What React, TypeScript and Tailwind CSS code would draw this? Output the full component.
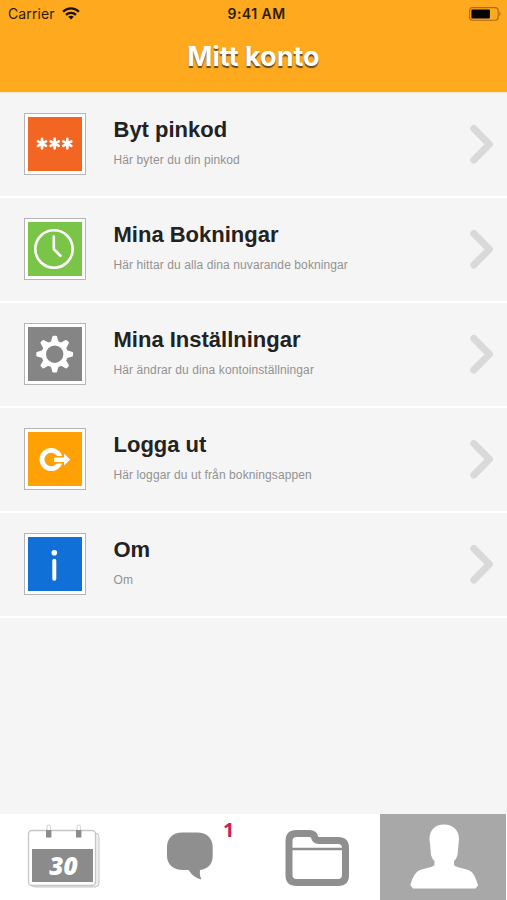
import React from 'react'

interface MenuItem {
  title: string
  subtitle: string
  color: string
  icon: React.ReactNode
}

const PinIcon = () => (
  <svg viewBox="0 0 54 54" className="w-full h-full" stroke="#fff" strokeWidth="2.7" strokeLinecap="round">
    {[14, 26.7, 39.3].map((x) => (
      <path key={x} transform={`translate(${x} 26.6)`} d="M0-4.7V4.7M-4-2.3L4 2.3M-4 2.3L4-2.3" />
    ))}
  </svg>
)

const ClockIcon = () => (
  <svg viewBox="0 0 54 54" className="w-full h-full" fill="none" stroke="#fff" strokeWidth="2.6" strokeLinecap="round">
    <circle cx="26" cy="27" r="18.7" />
    <path d="M25.8 14.5V27.3L32.4 33.8" />
  </svg>
)

const GearIcon = () => (
  <svg viewBox="0 0 54 54" className="w-full h-full">
    <circle cx="26.7" cy="27.2" r="10.9" fill="none" stroke="#fff" strokeWidth="4.4" />
    {[0, 45, 90, 135, 180, 225, 270, 315].map((angle) => (
      <path
        key={angle}
        transform={`translate(26.7 27.2) rotate(${angle})`}
        d="M-2.9-12L-1.3-17.4H1.3L2.9-12Z"
        fill="#fff"
        stroke="#fff"
        strokeWidth="2"
        strokeLinejoin="round"
      />
    ))}
  </svg>
)

const LogoutIcon = () => (
  <svg viewBox="0 0 54 54" className="w-full h-full">
    <circle cx="23.2" cy="27.5" r="9.2" fill="none" stroke="#fff" strokeWidth="4.8" />
    {/* the tile colour around the arrow cuts the ring open */}
    <path d="M26.2 25.4H36V21.6L42.2 27.6L36 33.7V29.9H26.2Z" fill="#fff" stroke="#ffa005" strokeWidth="3" />
    <path d="M26.2 25.4H36V21.6L42.2 27.6L36 33.7V29.9H26.2Z" fill="#fff" />
  </svg>
)

const InfoIcon = () => (
  <svg viewBox="0 0 54 54" className="w-full h-full" fill="#fff">
    <circle cx="26.3" cy="15.7" r="2.8" />
    <rect x="24.3" y="21.8" width="4" height="22" rx="2" />
  </svg>
)

const items: MenuItem[] = [
  { title: 'Byt pinkod', subtitle: 'Här byter du din pinkod', color: 'bg-[#f26522]', icon: <PinIcon /> },
  { title: 'Mina Bokningar', subtitle: 'Här hittar du alla dina nuvarande bokningar', color: 'bg-[#7ac547]', icon: <ClockIcon /> },
  { title: 'Mina Inställningar', subtitle: 'Här ändrar du dina kontoinställningar', color: 'bg-[#858585]', icon: <GearIcon /> },
  { title: 'Logga ut', subtitle: 'Här loggar du ut från bokningsappen', color: 'bg-[#ffa005]', icon: <LogoutIcon /> },
  { title: 'Om', subtitle: 'Om', color: 'bg-[#116fd8]', icon: <InfoIcon /> }
]

function StatusBar() {
  return (
    <div className="grid grid-cols-[1fr_auto_1fr] items-center h-[27px] pl-2 pr-[6px] text-[14px] text-[#2b1c05]">
      <div className="flex items-center gap-[7px]">
        <span className="tracking-[0.1px]">Carrier</span>
        <svg viewBox="0 0 18 13" className="w-[18px] h-[13px]" fill="none" stroke="#1a1203" strokeWidth="2.3">
          <path d="M1.1 4.7C5.6.3 12.4.3 16.9 4.7" />
          <path d="M4 7.8C6.8 5.1 11.2 5.1 14 7.8" />
          <path d="M9 12.6L6.2 9.8C7.8 8.4 10.2 8.4 11.8 9.8Z" fill="#1a1203" stroke="none" />
        </svg>
      </div>
      <div className="pl-1 text-center font-semibold whitespace-nowrap tracking-[0.45px]">9:41 AM</div>
      <svg viewBox="0 0 32 14" className="w-8 h-[14px] justify-self-end">
        <rect x=".6" y=".6" width="28.6" height="12.6" rx="3" fill="none" stroke="#a66d12" strokeWidth="1.1" />
        <rect x="2.4" y="2.4" width="18.5" height="9" rx="1" fill="#080500" />
        <path d="M30.4 4.6C31.9 5.3 31.9 8.5 30.4 9.2Z" fill="#a66d12" />
      </svg>
    </div>
  )
}

function MenuRow({ item }: { item: MenuItem }) {
  return (
    <li className="flex items-start h-[105px] pt-5 pl-6 pr-3 border-b-2 border-white">
      <div className="shrink-0 size-[62px] p-[3px] bg-white border border-[#b5b5b8]">
        <div className={`size-[54px] ${item.color}`}>{item.icon}</div>
      </div>
      <div className="flex-1 min-w-0 pl-[27.5px]">
        <div className="mt-[3px] text-[22px] leading-[28px] font-bold text-[#222] whitespace-nowrap">{item.title}</div>
        <div className="mt-[8px] text-[12px] leading-[16px] tracking-[0.1px] text-[#929292] whitespace-nowrap">{item.subtitle}</div>
      </div>
      <svg viewBox="0 0 26 40" className="shrink-0 w-[26px] h-10 mt-[11px]" fill="none" stroke="#d9d9d9" strokeWidth="7" strokeLinecap="round" strokeLinejoin="round">
        <path d="M4.8 4.5L20.4 20.3L4.8 36" />
      </svg>
    </li>
  )
}

function TabBar() {
  return (
    <nav className="grid grid-cols-[127px_127px_126px_126px] h-[86px] bg-white">
      <div>
        <svg viewBox="0 0 127 86" className="w-full h-full">
          <rect x="31" y="19" width="68" height="54" rx="4" fill="#eee" stroke="#c6c6c6" />
          <rect x="28.5" y="16.5" width="67" height="55" rx="3.5" fill="#fff" stroke="#c6c6c6" strokeWidth="1.3" />
          <rect x="32" y="35" width="61" height="33" fill="#8b8b8b" />
          <rect x="47" y="11" width="3.4" height="12" rx="1.7" fill="#fff" stroke="#d0d0d0" />
          <rect x="77" y="11" width="3.4" height="12" rx="1.7" fill="#fff" stroke="#d0d0d0" />
          <rect x="46" y="16" width="5.4" height="7.5" fill="#8b8b8b" />
          <rect x="76" y="16" width="5.4" height="7.5" fill="#8b8b8b" />
          <text x="63.5" y="60.5" textAnchor="middle" fill="#fff" className="font-['Open_Sans',sans-serif] text-[24.5px] font-extrabold italic">30</text>
        </svg>
      </div>
      <div className="relative">
        <svg viewBox="0 0 127 86" className="w-full h-full" fill="#8f8f8f">
          <path d="M55 18.5H70C80 18.5 85.7 24.5 85.7 33V42C85.7 50 81 55 73 56C72.5 59.5 73 62.5 74.5 65.5C69 64.5 65 61 61.5 56H56C46 56 40 50 40 42V33C40 24.5 46 18.5 55 18.5Z" />
        </svg>
        <span className="absolute left-[96px] top-[2px] font-['Noto_Sans',sans-serif] text-[20px] leading-[27px] font-bold text-[#cf1f58]">1</span>
      </div>
      <div>
        <svg viewBox="0 0 126 86" className="w-full h-full" fill="none" stroke="#8f8f8f">
          <path d="M35 27Q35 19.5 42.5 19.5H55.5Q60 19.5 60.5 23Q61 26.5 65 26.5H84Q91.500 26.5 91.5 34V61Q91.5 68.5 84 68.5H42.5Q35 68.5 35 61Z" strokeWidth="7" strokeLinejoin="round" />
          <path d="M37 35H90" strokeWidth="2.5" />
        </svg>
      </div>
      <div className="bg-[#a9a8a8]">
        <svg viewBox="0 0 126 86" className="w-full h-full" fill="#fff">
          <path d="M64 10.5C73 10.5 79 16 79 25L77.5 41C76.5 44 75.5 46 74 47V51C76 54 86 54 91 57.5C94.5 60.5 97 67 98 71.5L95.5 74.5H33L30.5 71.5C31 67 34 60.5 37.5 57.5C42 54 52.5 54 54.5 51V47C53 46 52 44 51 41L49.5 25C49.5 16 55 10.5 64 10.5Z" />
        </svg>
      </div>
    </nav>
  )
}

export default function App() {
  return (
    <div className="flex flex-col w-[507px] h-[900px] overflow-hidden bg-[#f5f5f5] font-['Liberation_Sans',sans-serif]">
      <header className="h-[93px] bg-[#ffa91f] border-b border-[#ffe9c8] font-['Inter',sans-serif]">
        <StatusBar />
        <h1 className="mt-[12px] text-center text-[27px] leading-[36px] font-bold text-white [text-shadow:0_2px_1px_#5a4a2a]">Mitt konto</h1>
      </header>
      <ul className="flex-1">
        {items.map((item) => (
          <MenuRow key={item.title} item={item} />
        ))}
      </ul>
      <TabBar />
    </div>
  )
}
